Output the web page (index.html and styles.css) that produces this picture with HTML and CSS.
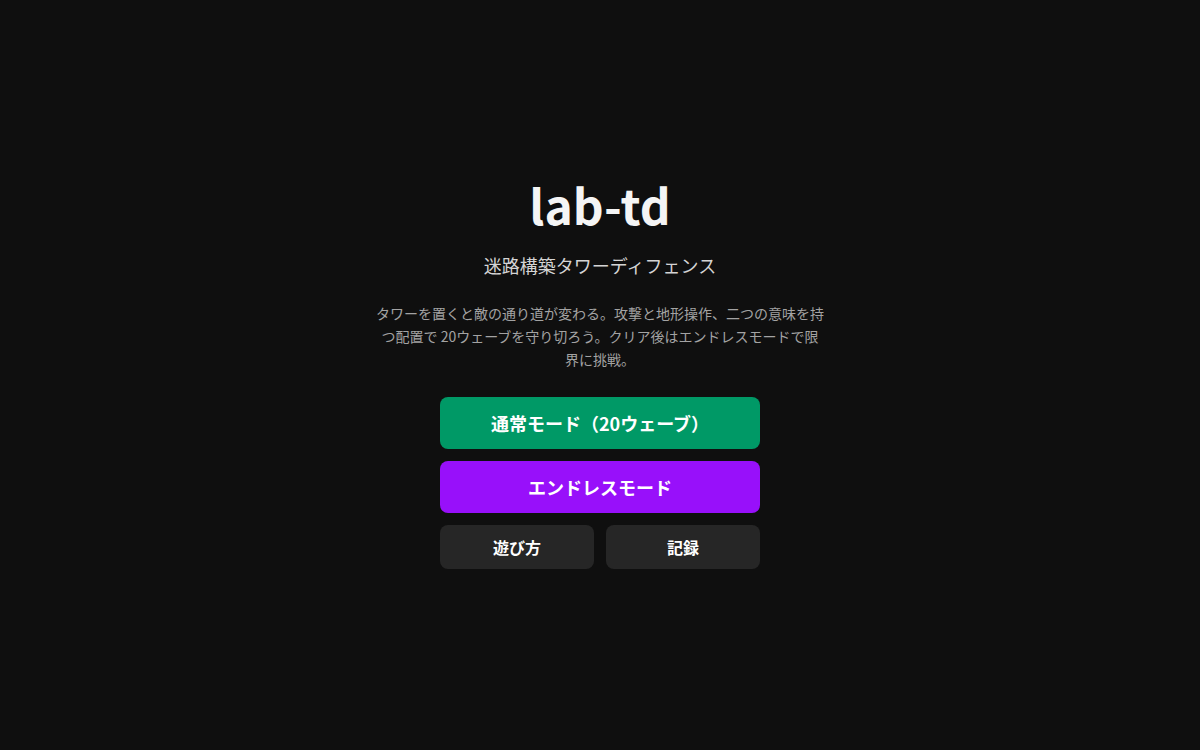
FILE: index.html
```html
<!DOCTYPE html>
<html lang="ja">
<head>
<meta charset="utf-8">
<title>lab-td</title>
<link rel="stylesheet" href="styles.css">
</head>
<body>
<main class="screen">
  <div class="menu">
    <h1 class="title">lab-td</h1>
    <p class="subtitle">迷路構築タワーディフェンス</p>
    <p class="desc">タワーを置くと敵の通り道が変わる。攻撃と地形操作、二つの意味を持つ配置で 20ウェーブを守り切ろう。クリア後はエンドレスモードで限界に挑戦。</p>
    <div class="buttons">
      <button class="btn btn-normal">通常モード（20ウェーブ）</button>
      <button class="btn btn-endless">エンドレスモード</button>
      <div class="row">
        <button class="btn btn-sub">遊び方</button>
        <button class="btn btn-sub">記録</button>
      </div>
    </div>
  </div>
</main>
</body>
</html>
```
FILE: styles.css
```css
* { box-sizing: border-box; }
html, body {
  margin: 0;
  padding: 0;
  background: #0f0f0f;
}
body {
  font-family: "Noto Sans CJK JP", "Noto Sans", sans-serif;
  color: #f5f5f5;
}
.screen {
  width: 100%;
  height: 100vh;
  display: flex;
  align-items: center;
  justify-content: center;
}
.menu {
  display: flex;
  flex-direction: column;
  align-items: center;
  text-align: center;
  padding-top: 1px;
}
.title {
  margin: 0 0 25px;
  font-size: 48px;
  line-height: 44px;
  font-weight: 700;
  color: #f5f5f5;
}
.subtitle {
  margin: 0 0 23px;
  font-size: 18px;
  line-height: 28px;
  color: #d4d4d4;
}
.desc {
  margin: 0 0 26px;
  width: 448px;
  font-size: 14px;
  line-height: 22.75px;
  color: #a3a3a3;
}
.buttons {
  width: 320px;
  display: flex;
  flex-direction: column;
  gap: 12px;
}
.row {
  display: grid;
  grid-template-columns: 1fr 1fr;
  gap: 12px;
}
.btn {
  border: none;
  border-radius: 8px;
  font-family: inherit;
  font-weight: 700;
  color: #ffffff;
  cursor: pointer;
  height: 52px;
  font-size: 18px;
}
.btn-normal { background: #009966; }
.btn-endless { background: #9810fa; }
.btn-sub {
  height: 44px;
  background: #262626;
  font-size: 16px;
}
```
